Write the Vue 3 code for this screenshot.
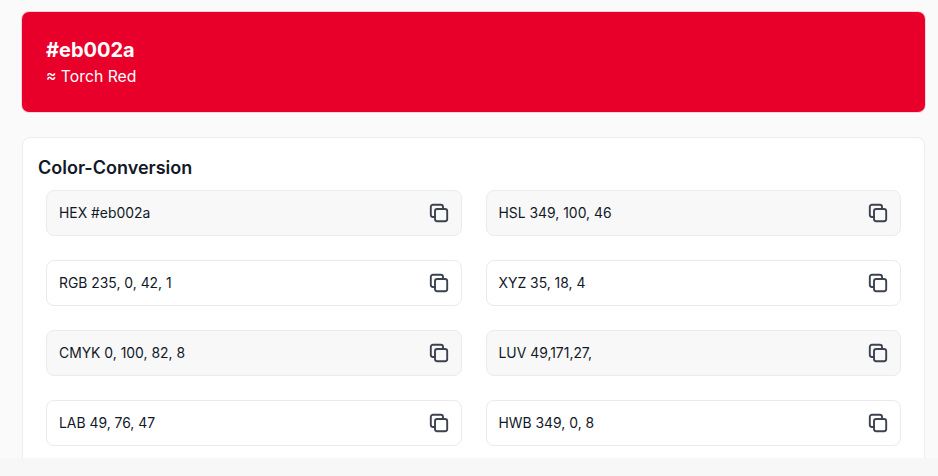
<script setup>
const rows = [
  { label: 'HEX #eb002a', shaded: true },
  { label: 'HSL 349, 100, 46', shaded: true },
  { label: 'RGB 235, 0, 42, 1' },
  { label: 'XYZ 35, 18, 4' },
  { label: 'CMYK 0, 100, 82, 8', shaded: true },
  { label: 'LUV 49,171,27,', shaded: true },
  { label: 'LAB 49, 76, 47' },
  { label: 'HWB 349, 0, 8' },
]
</script>

<template>
  <div class="page">
    <header class="hero">
      <h1>#eb002a</h1>
      <p>≈ Torch Red</p>
    </header>
    <section class="card">
      <h2>Color-Conversion</h2>
      <div class="grid">
        <div v-for="row in rows" :key="row.label" class="row" :class="{ shaded: row.shaded }">
          <span class="value">{{ row.label }}</span>
          <svg class="copy" viewBox="0 0 20 20" width="20" height="20" fill="none" stroke="#3c4250" stroke-width="1.9" stroke-linejoin="round" stroke-linecap="round">
            <rect x="6" y="6" width="12.2" height="12.2" rx="2.2" />
            <path d="M14 6V4a2.2 2.2 0 0 0-2.2-2.2H4A2.2 2.2 0 0 0 1.8 4v7.800A2.200 2.200 0 0 0 4 14h2" />
          </svg>
        </div>
      </div>
    </section>
    <div class="fade"></div>
  </div>
</template>

<style scoped>
.page {
  position: relative;
  height: 476px;
  box-sizing: border-box;
  overflow: hidden;
  padding: 12px 13px 0 22px;
  background: #fafafa;
  font-family: Inter, "Liberation Sans", sans-serif;
  color: #111827;
}

.hero {
  height: 100px;
  box-sizing: border-box;
  padding: 26px 24px 0;
  background: #e9002a;
  color: #fff;
  border-radius: 7px;
  box-shadow: 0 0 0 1px #f6d5da;
}

.hero h1 {
  margin: 0;
  font-size: 20px;
  line-height: 24px;
  font-weight: 700;
}

.hero p {
  margin: 4px 0 0;
  font-size: 15.75px;
  line-height: 21px;
}

.card {
  margin-top: 25px;
  height: 333px;
  box-sizing: border-box;
  padding: 20px 23px 0 15px;
  background: #fff;
  border: 1px solid #ededed;
  border-radius: 8px;
}

.card h2 {
  margin: 0;
  font-size: 18px;
  line-height: 20px;
  font-weight: 600;
}

.grid {
  display: grid;
  grid-template-columns: 1fr 1fr;
  gap: 24px;
  margin: 12px 0 0 8px;
}

.row {
  display: flex;
  align-items: center;
  justify-content: space-between;
  height: 46px;
  box-sizing: border-box;
  padding: 0 12px;
  border: 1px solid #ebebeb;
  border-radius: 8px;
  font-size: 13.9px;
  background: #fff;
}

.row.shaded {
  background: #f8f8f8;
}

.value {
  margin-bottom: 1px;
}

.fade {
  position: absolute;
  left: 0;
  right: 0;
  bottom: 0;
  height: 18px;
  background: rgba(246, 246, 246, 0.92);
}
</style>
